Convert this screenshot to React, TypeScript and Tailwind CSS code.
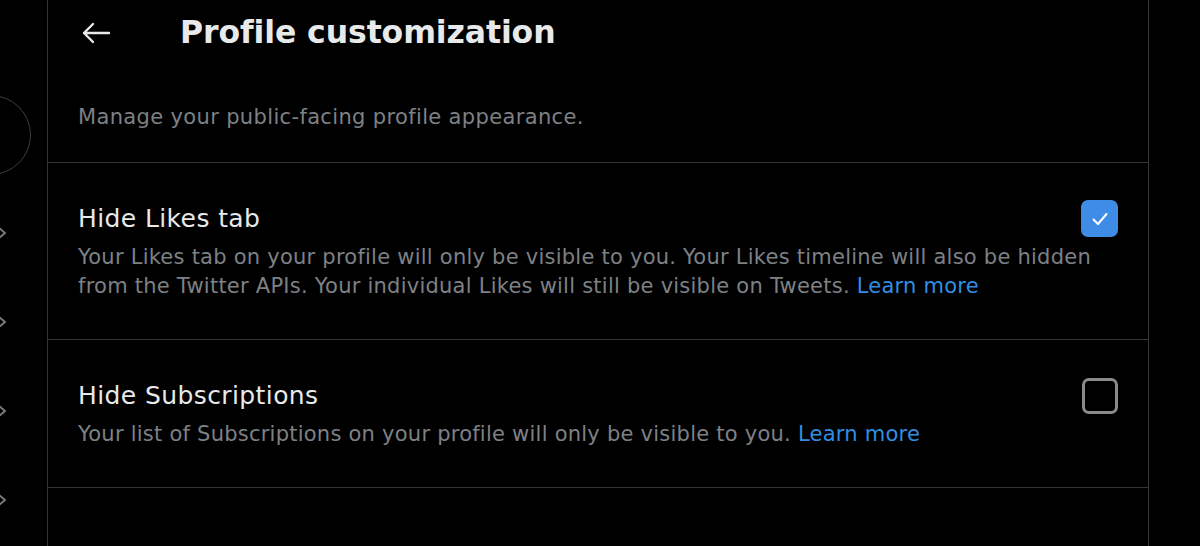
import React, { useState } from 'react';

const font = { fontFamily: '"DejaVu Sans", "Noto Sans", sans-serif' };

function Chevron() {
  return (
    <svg width="10" height="14" viewBox="0 0 10 14" className="-ml-[3px] shrink-0" fill="none">
      <path d="M1 1 L8 7 L1 13" stroke="#7a7a7a" strokeWidth="2" strokeLinecap="round" strokeLinejoin="round" />
    </svg>
  );
}

function Checkbox({ checked, onClick }: { checked: boolean; onClick: () => void }) {
  if (checked) {
    return (
      <button onClick={onClick} className="w-[37px] h-[37px] rounded-[7px] bg-[#3e8ce6] flex items-center justify-center shrink-0">
        <svg width="22" height="22" viewBox="0 0 22 22" fill="none">
          <path d="M4.5 11.5 L9 16 L17.5 6" stroke="white" strokeWidth="2" strokeLinecap="round" strokeLinejoin="round" />
        </svg>
      </button>
    );
  }
  return <button onClick={onClick} className="w-[36px] h-[36px] rounded-[7px] border-[3px] border-[#8a8a8a] shrink-0" />;
}

interface Setting {
  title: string;
  desc: string;
}

const settings: Setting[] = [
  {
    title: 'Hide Likes tab',
    desc: 'Your Likes tab on your profile will only be visible to you. Your Likes timeline will also be hidden from the Twitter APIs. Your individual Likes will still be visible on Tweets.',
  },
  {
    title: 'Hide Subscriptions',
    desc: 'Your list of Subscriptions on your profile will only be visible to you.',
  },
];

export default function App() {
  const [checked, setChecked] = useState([true, false]);

  return (
    <div className="w-[1200px] h-[546px] bg-black overflow-hidden flex" style={font}>
      {/* sidebar, mostly off screen */}
      <div className="w-[48px] shrink-0 border-r border-[#363636] flex flex-col overflow-hidden">
        <div className="mt-[95px] -ml-[49px] w-[80px] h-[80px] rounded-full border-[1.5px] border-[#3c3c3c] shrink-0" />
        <div className="mt-[51px] flex flex-col gap-[75px]">
          <Chevron />
          <Chevron />
          <Chevron />
          <Chevron />
        </div>
      </div>

      <div className="w-[1101px] shrink-0 border-r border-[#363636]">
        <div className="h-[66px] flex items-center">
          <svg width="30" height="24" viewBox="0 0 30 24" className="ml-[33px]" fill="none">
            <path d="M28 12 H3 M12 3 L3 12 L12 21" stroke="#e7e9ea" strokeWidth="2.4" strokeLinecap="round" strokeLinejoin="round" />
          </svg>
          <h1 className="ml-[69px] text-[31.5px] font-bold text-[#e7e9ea] tracking-[-0.1px]">Profile customization</h1>
        </div>

        <div className="px-[30px] pt-[37px] pb-[31px] border-b border-[#363636]">
          <p className="text-[21px] leading-[28px] text-[#7d8185] tracking-[0.35px]">Manage your public-facing profile appearance.</p>
        </div>

        {settings.map((s, i) => (
          <div key={s.title} className="px-[30px] pt-[37px] pb-[38px] border-b border-[#363636]">
            <div className="h-[37px] flex items-center justify-between">
              <span className="text-[25px] tracking-[0.4px] text-[#e7e9ea]">{s.title}</span>
              <Checkbox
                checked={checked[i]}
                onClick={() => setChecked(checked.map((c, j) => (j === i ? !c : c)))}
              />
            </div>
            <p className="mt-[6px] text-[21px] leading-[29px] text-[#7d8185] tracking-[0.24px]">
              {s.desc} <span className="text-[#2f8fe3]">Learn more</span>
            </p>
          </div>
        ))}
      </div>
    </div>
  );
}
